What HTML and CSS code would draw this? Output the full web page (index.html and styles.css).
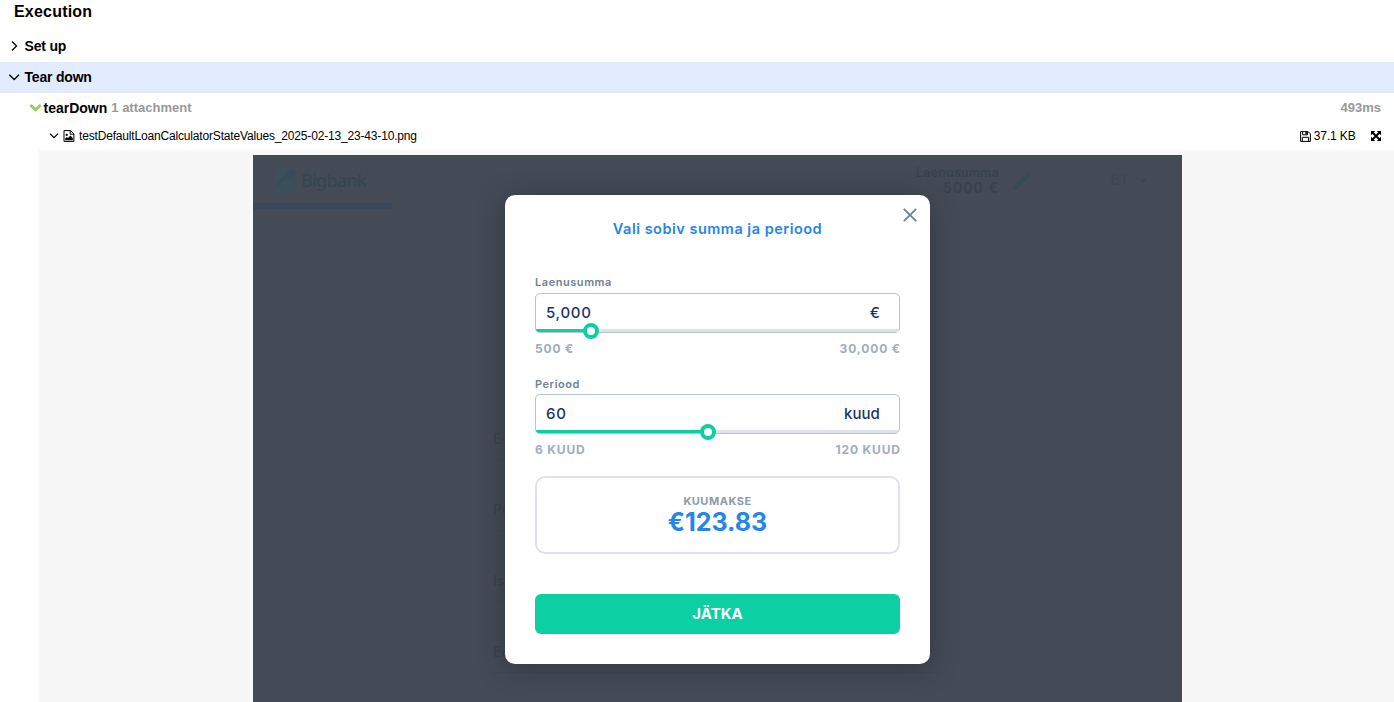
FILE: index.html
```html
<!DOCTYPE html>
<html lang="en">
<head>
<meta charset="utf-8">
<title>Execution</title>
<link rel="stylesheet" href="styles.css">
</head>
<body>
<main class="execution">
  <h1 class="title">Execution</h1>
  <div class="row stage">
    <svg class="arrow" width="12" height="12" viewBox="0 0 12 12"><path d="M4 1.500 8.500 6 4 10.500"/></svg>
    <span>Set up</span>
  </div>
  <div class="row stage active">
    <svg class="arrow" width="12" height="12" viewBox="0 0 12 12"><path d="M1.300 3.800 6.200 8.500 11 3.800"/></svg>
    <span>Tear down</span>
  </div>
  <div class="row step">
    <svg class="status" width="13" height="10" viewBox="0 0 13 10"><path d="M1.300 2 6.500 6.800 11.700 2"/></svg>
    <span class="step-name">tearDown</span>
    <span class="muted">1 attachment</span>
    <span class="muted duration">493ms</span>
  </div>
  <div class="row attachment">
    <svg class="arrow" width="10" height="10" viewBox="0 0 10 10"><path d="M.9 2.600 5 6.600 9.100 2.600"/></svg>
    <svg class="file" width="12" height="12" viewBox="0 0 12 12"><path d="M1 .6h6.500l3.400 3.300v7.500H1zM7.200.8v3.400h3.600" fill="none" stroke="#000"/><path d="M2.200 10.300V8.600l1.600-1.500 1.200 1 2.400-2.500 2.400 2.400v2.300z"/><circle cx="3.700" cy="4.900" r="1.100"/></svg>
    <span class="file-name">testDefaultLoanCalculatorStateValues_2025-02-13_23-43-10.png</span>
    <svg class="save" width="11" height="11" viewBox="0 0 11 11"><path d="M.6.6h7.500l2.300 2.300v7.500H.6zM2.600.8v3h4.900v-3M2.300 10.200V6.300h6.300v3.900" fill="none" stroke="#000"/><path d="M5.300 1h1.500v2.200H5.300z"/></svg>
    <span class="size">37.1 KB</span>
    <svg class="expand" width="10" height="10" viewBox="0 0 10 10"><path d="M0 0h4.200L0 4.200zM10 0v4.200L5.800 0zM0 10V5.800L4.200 10zM10 10H5.800L10 5.800z"/><path d="M1.500 1.500l7 7M8.500 1.500l-7 7" stroke="#000" stroke-width="2"/></svg>
  </div>
  <section class="preview">
    <div class="shot">
      <header class="bank-header">
        <div class="brand">
          <svg width="21" height="27" viewBox="0 0 21 27"><path d="M0 0h13q7 1 7 6.500 0 3.500-2.500 5.500 3 2.500 3 7 0 7-8 8H0z" fill="#3c4f5b"/><path d="M5 20Q5 11 17.500 12q3 2.500 3 7 0 7-8 8-7.500 0-7.500-7z" fill="#3a5059"/><path d="M0 20 16 2q4 1.500 4 4.500 0 3.500-2.500 5.500Q5 11 5 20z" fill="#394a59"/></svg>
          <span class="brand-name">Bigbank</span>
        </div>
        <div class="summary"><span class="summary-label">Laenusumma</span><span class="summary-value">5000 €</span></div>
        <svg class="pencil" width="18" height="18" viewBox="0 0 18 18"><path d="M0 14.300V18h3.700L14.500 7.200l-3.700-3.700zM17.700 4 14 .3l-2.200 2.200L15.500 6.200z"/></svg>
        <span class="lang">ET</span>
        <svg class="caret" width="6" height="4" viewBox="0 0 6 4"><path d="M0 0h6L3 4z"/></svg>
      </header>
      <div class="progress"></div>
      <div class="fields">
        <div>E-post</div>
        <div>Perekonnanimi</div>
        <div>Isikukood</div>
        <div>Eesnimi</div>
      </div>
      <div class="modal">
        <svg class="close" width="14" height="14" viewBox="0 0 14 14"><path d="M.8.8l12.400 12.400M13.200.8.8 13.200"/></svg>
        <h2 class="modal-title">Vali sobiv summa ja periood</h2>
        <div class="field">
          <label class="label">Laenusumma</label>
          <div class="input"><span class="num">5,000</span><span class="unit">€</span>
            <div class="track"><div class="fill" style="width:15.2%"></div></div>
            <i class="knob" style="left:15.2%"></i>
          </div>
          <div class="range"><span>500 €</span><span>30,000 €</span></div>
        </div>
        <div class="field">
          <label class="label label-period">Periood</label>
          <div class="input"><span class="num">60</span><span class="unit">kuud</span>
            <div class="track"><div class="fill" style="width:47.4%"></div></div>
            <i class="knob" style="left:47.4%"></i>
          </div>
          <div class="range"><span>6 KUUD</span><span>120 KUUD</span></div>
        </div>
        <div class="payment"><span class="payment-label">KUUMAKSE</span><span class="payment-value">€123.83</span></div>
        <button class="submit">JÄTKA</button>
      </div>
    </div>
  </section>
</main>
</body>
</html>
```
FILE: styles.css
```css
* { box-sizing: border-box; }
body { margin: 0; background: #fff; color: #000; font-family: "Liberation Sans", Arial, sans-serif; overflow: hidden; }
.execution { height: 702px; display: flex; flex-direction: column; overflow: hidden; }
.title { margin: 0; height: 31px; padding: 2px 0 0 14px; font-size: 16px; line-height: 20px; letter-spacing: .2px; }
.row { display: flex; align-items: center; flex: none; white-space: nowrap; }
.stage { height: 31px; padding: 0 0 2px 8px; gap: 4.500px; font-size: 14px; font-weight: bold; letter-spacing: -.2px; }
.active { background: #e2ecfe; }
.arrow path { fill: none; stroke: #000; stroke-width: 1.3; }
.step { height: 29px; padding: 0 13px 0 29px; font-size: 14px; font-weight: bold; }
.status path { fill: none; stroke: #97cc64; stroke-width: 2.8; }
.step-name { margin: 0 4px 0 1.500px; }
.muted { color: #999; font-size: 13px; }
.duration { margin-left: auto; }
.attachment { height: 28px; padding: 0 13px 0 49px; font-size: 12px; }
.file { margin: 0 4px; }
.file-name { margin-right: auto; letter-spacing: -.17px; }
.save { margin-right: 3px; }
.size { letter-spacing: -.15px; }
.expand { margin-left: 15.500px; }
.preview { flex: 1; margin-left: 39px; padding: 5px 212px 0 214px; background: #f7f7f7; }
.shot { position: relative; height: 547px; background: #444b56; overflow: hidden; font-family: Inter, sans-serif; }
.bank-header { height: 48px; display: flex; padding: 12px 36px 0 22px; color: #374150; }
.brand { display: flex; gap: 5px; color: #364554; }
.brand-name { font: 500 18px/27px "Noto Sans", sans-serif; letter-spacing: -.8px; }
.summary { width: 100px; margin-left: auto; display: flex; flex-direction: column; align-items: flex-end; font-weight: 600; }
.summary-label { font-size: 12.500px; line-height: 12px; letter-spacing: .2px; }
.summary-value { font-size: 14px; line-height: 18px; letter-spacing: 1.100px; }
.pencil { margin: 5px 0 0 14px; fill: #384b55; }
.lang { margin: 3px 0 0 79px; font-size: 15px; line-height: 20px; font-weight: 500; color: #3b4852; }
.caret { margin: 12px 0 0 11px; fill: #384650; }
.progress { width: 139px; height: 6px; background: #3a475b; }
.fields { width: 449px; margin: 213px auto 0; display: grid; grid-auto-rows: 71px; font-size: 14px; line-height: 34px; font-weight: 500; color: #3b424e; }
.fields div { height: 38px; border-bottom: 1px solid #414853; }
.modal { position: absolute; left: 252px; top: 40px; width: 425px; height: 469px; padding: 24px 30px 30px; border-radius: 10px; background: #fff; box-shadow: 0 4px 24px rgba(30, 36, 48, .5); display: flex; flex-direction: column; }
.close { position: absolute; right: 13px; top: 13px; }
.close path { fill: none; stroke: #6e809a; stroke-width: 1.8; }
.modal-title { margin: 0 0 33px; text-align: center; font-size: 14.500px; line-height: 20px; font-weight: 600; letter-spacing: .5px; color: #2586e8; }
.field { height: 101px; }
.label { display: block; height: 21px; font-size: 11px; line-height: 20px; font-weight: 600; letter-spacing: .55px; color: #718198; }
.label-period { line-height: 22px; }
.input { position: relative; height: 40px; padding: 0 19px 2px 10px; border: 1px solid #b8c3cf; border-radius: 5px; display: flex; justify-content: space-between; align-items: center; font-size: 15px; font-weight: 500; color: #17356b; }
.num { letter-spacing: .7px; }
.unit { letter-spacing: .1px; }
.track { position: absolute; left: 0; right: 0; bottom: 0; height: 3px; background: #dde3e8; border-radius: 0 0 4px 4px; }
.fill { height: 3px; background: #0dcfa4; border-radius: 0 0 0 4px; }
.knob { position: absolute; bottom: -7px; width: 16px; height: 16px; margin-left: -8px; border: 4px solid #0dcfa4; border-radius: 50%; background: #fff; }
.range { display: flex; justify-content: space-between; padding-top: 6px; font-size: 12px; line-height: 19px; font-weight: 700; letter-spacing: .85px; color: #a0adbb; }
.range span:last-child { margin-right: -.85px; }
.payment { height: 78px; margin-top: 2px; padding-top: 16px; border: 2px solid #dde3e8; border-radius: 10px; display: flex; flex-direction: column; align-items: center; font-weight: 700; }
.payment-label { font-size: 11px; line-height: 15px; letter-spacing: .5px; color: #8b9aad; }
.payment-value { font-size: 25px; line-height: 27px; color: #2586e8; }
.submit { height: 40px; margin-top: 40px; padding: 0 0 2px; border: 0; border-radius: 6px; background: #0dcfa4; color: #fff; font: 700 15px Inter, sans-serif; }
```
